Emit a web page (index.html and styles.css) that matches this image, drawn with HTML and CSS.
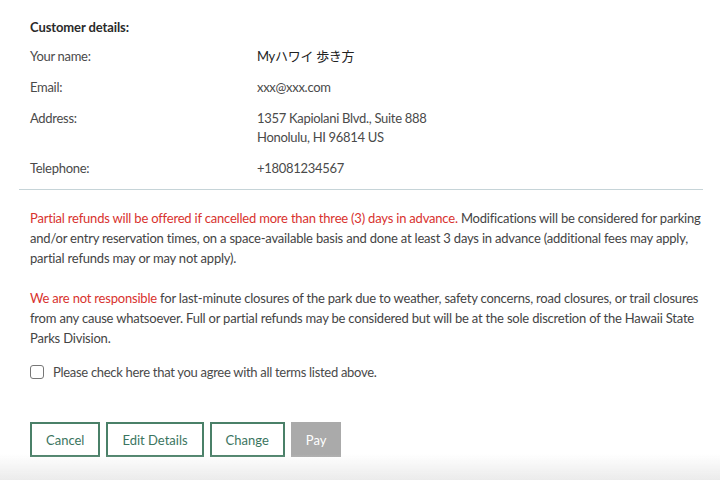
FILE: index.html
```html
<!DOCTYPE html>
<html>
  <head>
    <title>Confirm Reservation</title>
    <link rel="stylesheet" href="styles.css">
  </head>
  <body>
    <div class="summary">
      <h3 class="section-title">Customer details:</h3>
      <dl class="details">
        <dt>Your name:</dt>
        <dd class="name">Myハワイ 歩き方</dd>
        <dt>Email:</dt>
        <dd>xxx@xxx.com</dd>
        <dt>Address:</dt>
        <dd>1357 Kapiolani Blvd., Suite 888<br>Honolulu, HI 96814 US</dd>
        <dt>Telephone:</dt>
        <dd>+18081234567</dd>
      </dl>
    </div>
    <hr class="divider" />
    <div class="terms">
      <p><span class="warn">Partial refunds will be offered if cancelled more than three (3) days in advance.</span> Modifications will be considered for parking and/or entry reservation times, on a space-available basis and done at least 3 days in advance (additional fees may apply, partial refunds may or may not apply).</p>
      <p><span class="warn">We are not responsible</span> for last-minute closures of the park due to weather, safety concerns, road closures, or trail closures from any cause whatsoever. Full or partial refunds may be considered but will be at the sole discretion of the Hawaii State Parks Division.</p>
      <label class="agree">
        <input type="checkbox" id="agree-input" />
        <span>Please check here that you agree with all terms listed above.</span>
      </label>
      <div class="actions">
        <button class="btn">Cancel</button>
        <button class="btn">Edit Details</button>
        <button class="btn">Change</button>
        <button class="btn btn-pay" disabled>Pay</button>
      </div>
    </div>
    <div class="bottom-fade"></div>
  </body>
</html>
```

FILE: styles.css
```css
body {
  font-family: Lato, "Noto Sans CJK JP", sans-serif;
  font-size: 13px;
  letter-spacing: -0.3px;
  color: #4a4a4a;
  background-color: #fff;
  margin: 0;
  padding: 0 17px 0 19px;
}

.summary {
  padding: 19px 11px 0;
}

.section-title {
  margin: 0 0 12px;
  font-size: 13px;
  font-weight: bold;
  letter-spacing: -0.1px;
  color: #2a2a2a;
}

.details {
  display: grid;
  grid-template-columns: 227px 1fr;
  row-gap: 12px;
  margin: 0;
  line-height: 19px;
}

.details dt,
.details dd {
  margin: 0;
}

.details .name {
  color: #222;
}

.divider {
  border: none;
  border-top: 1px solid #c6d4d8;
  margin: 11px 0 0;
}

.terms {
  padding: 18px 0 0 11px;
}

.terms p {
  margin: 0 0 20px;
  line-height: 20px;
  letter-spacing: -0.2px;
  color: #444;
}

.terms p:last-of-type {
  margin-bottom: 16px;
}

.warn {
  color: #d8322e;
}

.agree {
  display: flex;
  align-items: center;
  gap: 9px;
}

.agree input {
  width: 14px;
  height: 14px;
  margin: 0;
  appearance: none;
  border: 1px solid #777;
  border-radius: 3px;
  background: #fff;
}

.actions {
  display: flex;
  gap: 6px;
  margin-top: 42px;
}

.btn {
  font-family: Lato, sans-serif;
  font-size: 13px;
  letter-spacing: normal;
  height: 35px;
  padding: 0 14px;
  background-color: #fff;
  color: #3b7560;
  border: 2px solid #4a8068;
  cursor: pointer;
}

.btn-pay {
  background-color: #aaa;
  border-color: #aaa;
  color: #fff;
  padding: 0 13px;
  cursor: default;
}

.bottom-fade {
  position: fixed;
  left: 0;
  right: 0;
  bottom: 0;
  height: 26px;
  background: linear-gradient(to bottom, rgba(236, 236, 236, 0), #ebebeb);
  pointer-events: none;
}
```
